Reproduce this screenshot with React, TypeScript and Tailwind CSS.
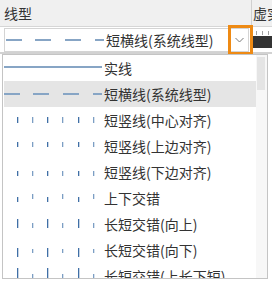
import React from 'react';

type Tick = { y: number; h: number; light?: boolean };

const XS = [13, 28, 43, 58, 74, 89];

function Ticks({ pattern }: { pattern: (i: number) => Tick }) {
  return (
    <svg width="100" height="26" className="shrink-0">
      {XS.map((x, i) => {
        const t = pattern(i);
        return <rect key={i} x={x} y={t.y} width="1.3" height={t.h} fill={t.light ? '#7c9ec4' : '#3f6fa6'} />;
      })}
    </svg>
  );
}

function Solid() {
  return (
    <svg width="100" height="26" className="shrink-0">
      <rect x="0" y="11" width="98" height="2" fill="#87a5c5" />
    </svg>
  );
}

function Dashed() {
  return (
    <svg width="100" height="26" className="shrink-0">
      {[0, 29, 59, 89].map((x, i) => (
        <rect key={i} x={x} y="12" width={i === 3 ? 9 : 16} height="2" fill="#87a5c5" />
      ))}
    </svg>
  );
}

const items: { label: string; preview: React.ReactNode; active?: boolean }[] = [
  { label: '实线', preview: <Solid /> },
  { label: '短横线(系统线型)', preview: <Dashed />, active: true },
  { label: '短竖线(中心对齐)', preview: <Ticks pattern={(i) => ({ y: 10, h: 6, light: i % 2 === 1 })} /> },
  { label: '短竖线(上边对齐)', preview: <Ticks pattern={(i) => ({ y: 9, h: 5, light: i % 2 === 1 })} /> },
  { label: '短竖线(下边对齐)', preview: <Ticks pattern={(i) => ({ y: 12, h: 5, light: i % 2 === 1 })} /> },
  { label: '上下交错', preview: <Ticks pattern={(i) => (i % 2 ? { y: 9, h: 5, light: true } : { y: 12, h: 5 })} /> },
  { label: '长短交错(向上)', preview: <Ticks pattern={(i) => (i % 2 ? { y: 12, h: 5, light: true } : { y: 8, h: 9 })} /> },
  { label: '长短交错(向下)', preview: <Ticks pattern={(i) => (i % 2 ? { y: 12, h: 4, light: true } : { y: 11, h: 9 })} /> },
  { label: '长短交错(上长下短)', preview: <Ticks pattern={(i) => (i % 2 ? { y: 11, h: 4, light: true } : { y: 5, h: 10 })} /> },
];

export default function App() {
  return (
    <div className="relative w-[272px] h-[283px] overflow-hidden bg-white text-[14px] text-[#333] font-['Noto_Sans_CJK_SC','Noto_Sans',sans-serif]">
      {/* Header */}
      <div className="flex h-[27px] bg-[#f0f0f0] border-b border-[#d6d6d6]">
        <div className="w-[252px] shrink-0 border-r border-[#d0d0d0] pl-[4px] leading-[26px]">线型</div>
        <div className="pl-[1px] leading-[26px] whitespace-nowrap">虚实线</div>
      </div>

      {/* Combobox row */}
      <div className="flex h-[27px] border-b-[2px] border-[#d2d2d2]">
        <div className="w-[252px] shrink-0 pl-[4px] pr-[3px] pt-[1px]">
          <div className="flex h-[24px] items-center border border-[#d4d4d4] bg-white">
            <div className="pl-[1px]">
              <Dashed />
            </div>
            <span className="flex-1 whitespace-nowrap leading-[22px]">短横线(系统线型)</span>
            <div className="flex w-[19px] h-full items-center justify-center border-l border-[#e2e2e2]">
              <svg width="9" height="6" viewBox="0 0 9 6">
                <path d="M0.5 1 L4.5 5 L8.5 1" fill="none" stroke="#7a7a7a" strokeWidth="1" />
              </svg>
            </div>
          </div>
        </div>
        <div className="flex-1 pt-[3px]">
          <svg width="20" height="22">
            <rect x="4" y="1" width="1" height="4" fill="#a0a0a0" />
            <rect x="10" y="1" width="1" height="4" fill="#a0a0a0" />
            <rect x="16" y="1" width="1" height="4" fill="#a0a0a0" />
            <rect x="1" y="6" width="19" height="12" fill="#333" />
          </svg>
        </div>
      </div>

      {/* Focus ring on dropdown button */}
      <div className="absolute left-[228px] top-[25px] w-[25px] h-[30px] border-[3px] border-[#ee8a14]" />

      {/* Dropdown list */}
      <div className="absolute left-[2px] top-[54px] w-[266px] h-[225px] flex border border-[#c4c4c4] bg-white overflow-hidden">
        <div className="flex-1 flex flex-col pl-[1px]">
          {items.map((it) => (
            <div
              key={it.label}
              className={`flex h-[26px] shrink-0 items-center ${it.active ? 'bg-[#e5e5e5]' : ''}`}
            >
              {it.preview}
              <span className="whitespace-nowrap leading-[26px]">{it.label}</span>
            </div>
          ))}
        </div>
        <div className="w-[11px] shrink-0 bg-[#f7f7f7] pt-[2px] pl-[1px]">
          <div className="w-[8px] h-[33px] bg-[#e4e4e4]" />
        </div>
      </div>
    </div>
  );
}
